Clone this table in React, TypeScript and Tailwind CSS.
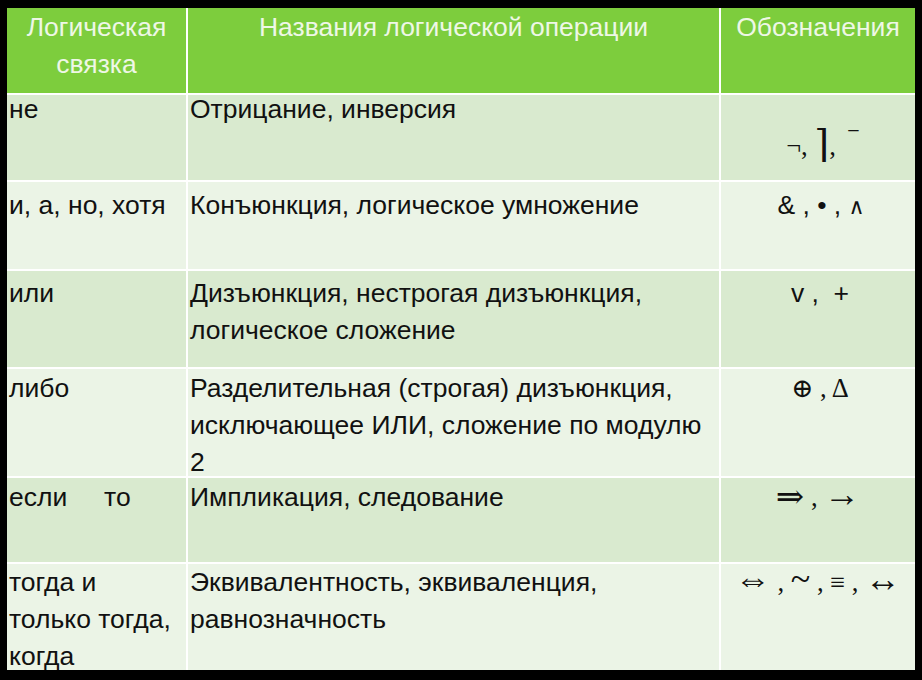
import React from "react";

const sans = "font-['Liberation_Sans','Arial',sans-serif]";
const serif = "font-['Liberation_Serif','DejaVu_Serif',serif]";

interface Row {
  bg: string;
  offset: string;
  left: string[];
  name: string[];
  signs: React.ReactNode;
}

const dark = "bg-[#d9eacf]";
const light = "bg-[#ebf4e6]";

const rows: Row[] = [
  {
    bg: dark,
    offset: "-mt-[4px]",
    left: ["не"],
    name: ["Отрицание, инверсия"],
    signs: (
      <div className={`${serif} whitespace-pre pt-[37px] pl-[8px]`}>
        <span>¬</span>
        <span>, </span>
        <span className="text-[38px] leading-[0] relative top-[2px]">⌉</span>
        <span>,  </span>
        <span className="relative -top-[3px]">‾</span>
      </div>
    ),
  },
  {
    bg: light,
    offset: "pt-[5px]",
    left: ["и, а, но, хотя"],
    name: ["Конъюнкция, логическое умножение"],
    signs: (
      <span className="whitespace-pre pl-[6px]">
        &amp; , • , <span className={`${serif} text-[22px]`}>∧</span>
      </span>
    ),
  },
  {
    bg: dark,
    offset: "pt-[4px]",
    left: ["или"],
    name: ["Дизъюнкция, нестрогая дизъюнкция,", "логическое сложение"],
    signs: <span className="whitespace-pre pl-[4px]">v ,  +</span>,
  },
  {
    bg: light,
    offset: "pt-[1px]",
    left: ["либо"],
    name: [
      "Разделительная (строгая) дизъюнкция,",
      "исключающее ИЛИ, сложение по модулю",
      "2",
    ],
    signs: <span className={`${serif} whitespace-pre pl-[4px]`}>⊕ , Δ</span>,
  },
  {
    bg: dark,
    offset: "pt-[1px]",
    left: ["если     то"],
    name: ["Импликация, следование"],
    signs: (
      <span className={`${serif} whitespace-pre`}>
        <span className="text-[34px] leading-[0] relative top-[2px]">⇒</span> ,{" "}
        <span className="text-[36px] leading-[0]">→</span>
      </span>
    ),
  },
  {
    bg: light,
    offset: "pt-0",
    left: ["тогда и", "только тогда,", "когда"],
    name: ["Эквивалентность, эквиваленция,", "равнозначность"],
    signs: (
      <span className={`${serif} whitespace-pre`}>
        <span className="text-[36px] leading-[0]">⇔</span> ,{" "}
        <span className="text-[36px] leading-[0]">~</span> , ≡ ,{" "}
        <span className="text-[36px] leading-[0]">↔</span>
      </span>
    ),
  },
];

const Lines: React.FC<{ lines: string[] }> = ({ lines }) => (
  <>
    {lines.map((l, i) => (
      <div key={i} className="whitespace-pre">
        {l}
      </div>
    ))}
  </>
);

export default function App() {
  return (
    <div className={`w-[922px] h-[680px] bg-black pt-[8px] pl-[7px] ${sans}`}>
      <div className="grid grid-cols-[179px_531px_194px] grid-rows-[85px_85px_87px_96px_107px_84px_106px] gap-[2px] w-[908px] bg-white text-[26.5px] leading-[37px] text-[#111]">
        <div className="bg-[#7dcd3d] text-[#eef7e6] text-center pt-[1px]">
          <div>Логическая</div>
          <div>связка</div>
        </div>
        <div className="bg-[#7dcd3d] text-[#eef7e6] text-center pt-[1px]">
          Названия логической операции
        </div>
        <div className="bg-[#7dcd3d] text-[#eef7e6] text-center pt-[1px]">
          Обозначения
        </div>
        {rows.map((r, i) => (
          <React.Fragment key={i}>
            <div className={r.bg}>
              <div className={`${r.offset} pl-[2px]`}>
                <Lines lines={r.left} />
              </div>
            </div>
            <div className={r.bg}>
              <div className={`${r.offset} pl-[2px]`}>
                <Lines lines={r.name} />
              </div>
            </div>
            <div className={r.bg}>
              <div className={`${r.offset} text-center`}>{r.signs}</div>
            </div>
          </React.Fragment>
        ))}
      </div>
    </div>
  );
}
